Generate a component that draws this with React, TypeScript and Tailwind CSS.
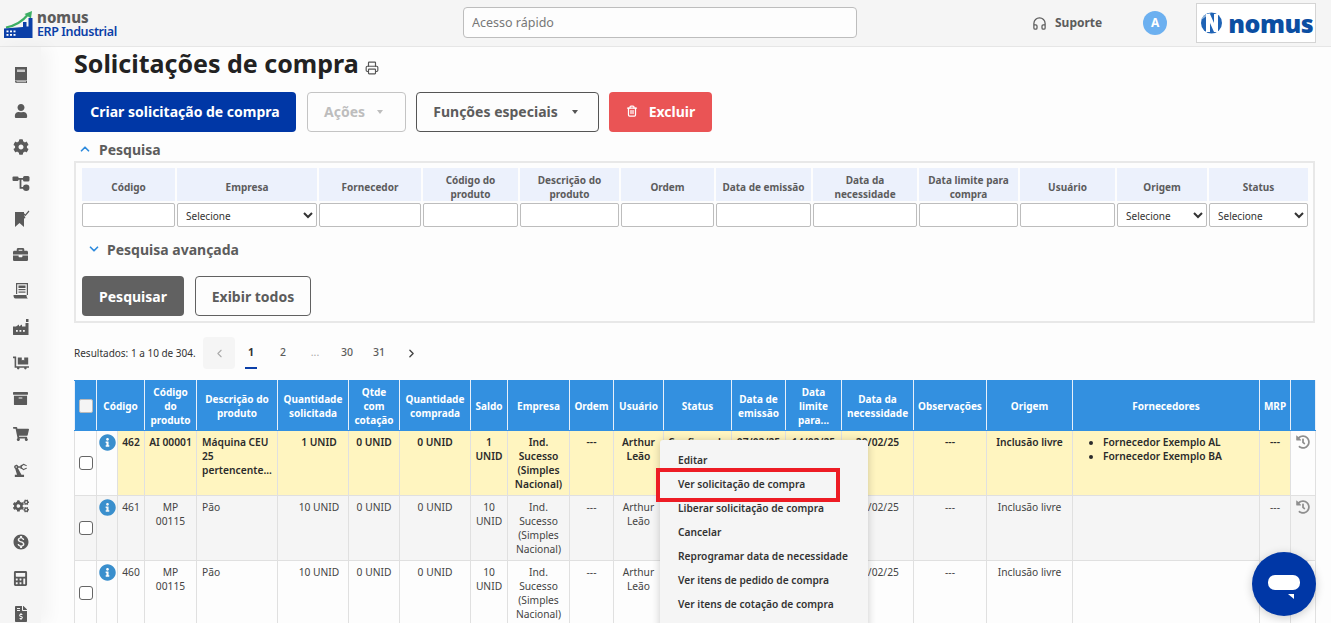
import React from "react";
import { ChevronDown, ChevronLeft, ChevronRight, ChevronUp, Headphones, Printer, Trash2 } from "lucide-react";
import {
  FaArchive,
  FaBriefcase,
  FaCalculator,
  FaCog,
  FaCogs,
  FaDollyFlatbed,
  FaFileInvoiceDollar,
  FaHistory,
  FaInfoCircle,
  FaShoppingCart,
  FaUser,
} from "react-icons/fa";
import { MdMonetizationOn, MdPrecisionManufacturing } from "react-icons/md";

function BookIcon() {
  return (
    <svg width="18" height="18" viewBox="0 0 18 18" fill="currentColor">
      <path d="M3 1H15V14H4.5C3.5 14 3 14.5 3 15Z" />
      <rect x="5" y="3.5" width="8" height="2.5" fill="#c9c9c9" />
      <path d="M3 15C3 14.6 3.5 14.6 4.5 14.6H15V17H4.5C3.5 17 3 16 3 15Z" />
      <rect x="4.5" y="15.4" width="9.5" height="0.8" fill="#f5f5f5" />
    </svg>
  );
}

function TreeIcon() {
  return (
    <svg width="18" height="18" viewBox="0 0 18 18" fill="currentColor">
      <rect x="0.5" y="2.5" width="6" height="4.5" rx="1" />
      <rect x="11" y="2" width="6.5" height="5.5" rx="1.5" />
      <circle cx="14.2" cy="13.8" r="3.2" />
      <path d="M6 4.8H12M8.5 4.8V13.8H12" stroke="currentColor" strokeWidth="1.8" fill="none" />
    </svg>
  );
}

function BookmarkCheckIcon() {
  return (
    <svg width="18" height="18" viewBox="0 0 18 18" fill="currentColor">
      <path d="M3 2H12V5L13.5 8L12 8.5V17L7.5 13L3 17Z" />
      <path d="M11.5 3.5L13.3 5.3L17 1" stroke="currentColor" strokeWidth="1.2" fill="none" />
    </svg>
  );
}

function ReceiptIcon() {
  return (
    <svg width="18" height="18" viewBox="0 0 18 18" fill="currentColor">
      <path d="M4 1H16V13H14.8V2.2H5.2V12H4Z" />
      <rect x="6.5" y="3.5" width="7" height="2.5" />
      <rect x="6.5" y="7" width="7" height="1.2" />
      <rect x="6.5" y="9.5" width="7" height="1.2" />
      <path d="M1.5 13H14.5C14.5 15 15 16 16 16.5H3.5C2 16.5 1.5 15 1.5 13Z" />
    </svg>
  );
}

function FactoryIcon() {
  return (
    <svg width="18" height="18" viewBox="0 0 18 18" fill="currentColor">
      <path d="M1 8.5H4L7 6.5V8.5L10 6.5V8.5H13.5V5H16.5V17H1.5C1.2 17 1 16.8 1 16.5Z" />
      <rect x="14" y="1" width="2.5" height="3" />
      <g fill="#f5f5f5">
        <rect x="4" y="12" width="1.8" height="1.8" />
        <rect x="7.5" y="12" width="1.8" height="1.8" />
        <rect x="11" y="12" width="1.8" height="1.8" />
      </g>
    </svg>
  );
}

const sideIcons = [
  <BookIcon />,
  <FaUser size={14} />,
  <FaCog size={16} />,
  <TreeIcon />,
  <BookmarkCheckIcon />,
  <FaBriefcase size={15} />,
  <ReceiptIcon />,
  <FactoryIcon />,
  <FaDollyFlatbed size={16} />,
  <FaArchive size={15} />,
  <FaShoppingCart size={16} />,
  <MdPrecisionManufacturing size={17} />,
  <FaCogs size={16} />,
  <MdMonetizationOn size={18} />,
  <FaCalculator size={15} />,
  <FaFileInvoiceDollar size={16} />,
];

const filters = [
  { label: "Código", width: "w-[93px]" },
  { label: "Empresa", width: "w-[140px]", select: true },
  { label: "Fornecedor", width: "w-[102px]" },
  { label: "Código do produto", width: "w-[95px]" },
  { label: "Descrição do produto", width: "w-[99px]" },
  { label: "Ordem", width: "w-[93px]" },
  { label: "Data de emissão", width: "w-[95px]" },
  { label: "Data da necessidade", width: "w-[104px]" },
  { label: "Data limite para compra", width: "w-[99px]" },
  { label: "Usuário", width: "w-[95px]" },
  { label: "Origem", width: "w-[90px]", select: true },
  { label: "Status", width: "w-[99px]", select: true },
];

const columns = [
  { label: "" },
  { label: "Código", span: 2 },
  { label: "Código do produto" },
  { label: "Descrição do produto" },
  { label: "Quantidade solicitada" },
  { label: "Qtde com cotação" },
  { label: "Quantidade comprada" },
  { label: "Saldo" },
  { label: "Empresa" },
  { label: "Ordem" },
  { label: "Usuário" },
  { label: "Status" },
  { label: "Data de emissão" },
  { label: "Data limite para..." },
  { label: "Data da necessidade" },
  { label: "Observações" },
  { label: "Origem" },
  { label: "Fornecedores" },
  { label: "MRP" },
  { label: "" },
];

const rows = [
  {
    code: "462",
    product: "AI 00001",
    description: "Máquina CEU 25 pertencente...",
    requested: "1 UNID",
    balance: "1 UNID",
    bg: "bg-[#fff5c0]",
    weight: "font-semibold text-[#2b2b2b]",
    suppliers: ["Fornecedor Exemplo AL", "Fornecedor Exemplo BA"],
    status: "Confirmada",
    issued: "07/02/25",
    limit: "14/02/25",
    date: "20/02/25",
  },
  // status e datas dessas linhas ficam atras do menu aberto
  {
    code: "461",
    product: "MP 00115",
    description: "Pão",
    requested: "10 UNID",
    balance: "10 UNID",
    bg: "bg-[#f5f5f5]",
    weight: "font-normal text-[#444]",
    suppliers: [],
    status: "",
    issued: "",
    limit: "",
    date: "20/02/25",
  },
  {
    code: "460",
    product: "MP 00115",
    description: "Pão",
    requested: "10 UNID",
    balance: "10 UNID",
    bg: "bg-[#fdfdfd]",
    weight: "font-normal text-[#444]",
    suppliers: [],
    status: "",
    issued: "",
    limit: "",
    date: "20/02/25",
  },
];

const menuItems = [
  "Editar",
  "Ver solicitação de compra",
  "Liberar solicitação de compra",
  "Cancelar",
  "Reprogramar data de necessidade",
  "Ver itens de pedido de compra",
  "Ver itens de cotação de compra",
];

const cell = "border border-[#e0e0e0] px-[5px] pt-[4px] pb-0 align-top text-center leading-[14px]";

function Logo() {
  return (
    <div className="flex w-[463px] items-center pt-[3px] pl-[4px]">
      <svg width="29" height="28" viewBox="0 0 29 28">
        <path d="M2 16.5C10 15 18 11 24 3.5" stroke="#3dae64" strokeWidth="2.2" fill="none" />
        <path d="M20.5 3L28 0L27 7.5Z" fill="#3dae64" />
        <path d="M0 27V17.5L19 16V11H22.5V15.5H24.5V7H28.5V27Z" fill="#0b3fa8" />
        <g fill="#fff">
          <rect x="2.5" y="19.5" width="2" height="1.8" />
          <rect x="6" y="19.5" width="2" height="1.8" />
          <rect x="9.5" y="19.5" width="2" height="1.8" />
          <rect x="2.5" y="23" width="2" height="1.8" />
          <rect x="6" y="23" width="2" height="1.8" />
          <rect x="9.5" y="23" width="2" height="1.8" />
        </g>
      </svg>
      <div className="ml-[4px] flex flex-col">
        <span className="text-[15px] leading-[13px] font-extrabold text-[#5c5c5c]">nomus</span>
        <span className="mt-[1px] text-[12.5px] leading-[13px] font-semibold tracking-[-0.4px] text-[#0b3fa8]">ERP Industrial</span>
      </div>
    </div>
  );
}

function Header() {
  return (
    <header className="flex h-[47px] shrink-0 items-center border-b border-[#e6e6e6] bg-[#f5f5f5]">
      <Logo />
      <div className="mb-[1px] w-[394px]">
        <input
          placeholder="Acesso rápido"
          className="h-[31px] w-full rounded-[4px] border border-[#bdbdbd] bg-[#fdfdfd] px-[8px] text-[12.5px] outline-none placeholder:text-[#777]"
        />
      </div>
      <div className="ml-[175px] flex items-center gap-[8px] text-[#5c5c5c]">
        <Headphones size={15} strokeWidth={2} />
        <span className="text-[12px] font-bold">Suporte</span>
      </div>
      <div className="ml-[41px] flex h-[24px] w-[24px] items-center justify-center rounded-full bg-[#6cb0f0] text-[12px] font-bold text-white">A</div>
      <div className="ml-[29px] flex h-[40px] w-[120px] items-center gap-[6px] border border-[#d4d4d4] bg-white pl-[4px]">
        <svg width="21" height="22" viewBox="0 0 21 22">
          <circle cx="10.5" cy="11" r="10.5" fill="#1f63b5" />
          <path d="M0 8C2 3 6 1 10 1L3 6Z" fill="#8fb4dc" />
          <path d="M5 2H9L13 11V2H17V20H13L9 11V20H5Z" fill="#fff" />
        </svg>
        <span className="text-[25px] leading-none font-black tracking-[-0.5px] text-[#0b4ea2]">nomus</span>
      </div>
    </header>
  );
}

function Sidebar() {
  return (
    <aside className="flex w-[41px] shrink-0 flex-col items-center gap-[18px] bg-[#f5f5f5] pt-[19px] shadow-[8px_0_16px_rgba(0,0,0,0.04)]">
      {sideIcons.map((icon, i) => (
        <div key={i} className="flex h-[18px] w-[18px] items-center justify-center text-[#5a5a5a]">
          {icon}
        </div>
      ))}
    </aside>
  );
}

function Actions() {
  const button = "flex h-[40px] items-center justify-center rounded-[4px] pb-[2px] text-[14px] font-bold";
  return (
    <div className="mt-[13px] flex gap-[10px]">
      <button className={`${button} w-[222px] bg-[#0037a6] text-white`}>Criar solicitação de compra</button>
      <button className={`${button} ml-px w-[99px] gap-[12px] border border-[#c4c4c4] pr-[6px] text-[#bdbdbd]`}>
        Ações <span className="mt-[1px] border-x-[3.5px] border-t-[4px] border-x-transparent border-t-[#bdbdbd]" />
      </button>
      <button className={`${button} w-[183px] gap-[14px] border border-[#555] pr-[4px] text-[#5c5c5c]`}>
        Funções especiais <span className="mt-[1px] border-x-[3.5px] border-t-[4px] border-x-transparent border-t-[#555]" />
      </button>
      <button className={`${button} w-[103px] gap-[11px] bg-[#ea5455] text-white`}>
        <Trash2 size={12} strokeWidth={2.5} /> Excluir
      </button>
    </div>
  );
}

function Search() {
  return (
    <section className="mt-[7px]">
      <div className="flex h-[20px] items-center gap-[7px] pl-[4px]">
        <ChevronUp size={14} strokeWidth={3} className="text-[#2f8bdd]" />
        <span className="text-[14px] font-bold text-[#5c5c5c]">Pesquisa</span>
      </div>
      <div className="mt-[2px] h-[162px] border-2 border-[#e8e8e8] pt-[5px] pl-[6px]">
        <div className="flex gap-[2px]">
          {filters.map((f) => (
            <div key={f.label} className={`flex ${f.width} flex-col gap-[2px]`}>
              <div className="flex h-[33px] items-center justify-center bg-[#ecf1fc] px-[4px] pt-[4px] text-center text-[10px] leading-[14px] font-bold text-[#5c5c5c]">
                {f.label}
              </div>
              {f.select ? (
                <select className="h-[24px] w-full rounded-[2px] border border-[#bdbdbd] bg-white pt-[2px] pl-[4px] text-[10px] text-[#333]">
                  <option>Selecione</option>
                </select>
              ) : (
                <input className="h-[24px] w-full rounded-[2px] border border-[#bdbdbd] bg-white" />
              )}
            </div>
          ))}
        </div>
        <div className="mt-[12px] flex h-[20px] items-center gap-[6px] pl-[5px]">
          <ChevronDown size={14} strokeWidth={3} className="text-[#2f8bdd]" />
          <span className="text-[14px] font-bold text-[#5c5c5c]">Pesquisa avançada</span>
        </div>
        <div className="mt-[17px] flex gap-[11px]">
          <button className="h-[40px] w-[102px] rounded-[4px] bg-[#616161] text-[14px] font-bold text-white">Pesquisar</button>
          <button className="h-[40px] w-[116px] rounded-[4px] border border-[#616161] text-[14px] font-bold text-[#5c5c5c]">Exibir todos</button>
        </div>
      </div>
    </section>
  );
}

function Pagination() {
  const pages = ["1", "2", "...", "30", "31"];
  return (
    <div className="mt-[14px] flex h-[32px] items-center">
      <span className="w-[129px] pt-[1px] text-[10px] text-[#333]">Resultados: 1 a 10 de 304.</span>
      <div className="flex h-[32px] w-[32px] items-center justify-center rounded-[4px] bg-[#f5f5f5] text-[#aaa]">
        <ChevronLeft size={13} strokeWidth={2} />
      </div>
      {pages.map((p, i) => (
        <div key={p} className="relative flex h-[32px] w-[32px] items-center justify-center text-[10.5px] text-[#5c5c5c]">
          <span className={i === 0 ? "font-bold text-[#333]" : p === "..." ? "text-[#aaa]" : "font-medium"}>{p}</span>
          {i === 0 && <span className="absolute bottom-0 left-[10px] h-[2px] w-[12px] bg-[#0b3fa8]" />}
        </div>
      ))}
      <div className="flex h-[32px] w-[32px] items-center justify-center text-[#444]">
        <ChevronRight size={13} strokeWidth={2.5} />
      </div>
    </div>
  );
}

function ResultsTable() {
  return (
    <table className="mt-[11px] w-[1241px] table-fixed border-collapse text-[10.25px]">
      <colgroup>
        <col className="w-[22px]" />
        <col className="w-[21px]" />
        <col className="w-[27px]" />
        <col className="w-[52px]" />
        <col className="w-[81px]" />
        <col className="w-[71px]" />
        <col className="w-[51px]" />
        <col className="w-[71px]" />
        <col className="w-[37px]" />
        <col className="w-[62px]" />
        <col className="w-[44px]" />
        <col className="w-[50px]" />
        <col className="w-[68px]" />
        <col className="w-[54px]" />
        <col className="w-[56px]" />
        <col className="w-[72px]" />
        <col className="w-[73px]" />
        <col className="w-[86px]" />
        <col className="w-[187px]" />
        <col className="w-[31px]" />
        <col className="w-[25px]" />
      </colgroup>
      <thead>
        <tr className="h-[50px] bg-[#3390e0] text-white">
          {columns.map((c, i) => (
            <th key={i} colSpan={c.span ?? 1} className="border border-x-[#e8f0fa] border-y-[#3390e0] px-[1px] text-center text-[10px] leading-[14px] font-bold">
              {i === 0 ? (
                <input type="checkbox" className="mx-auto block h-[14px] w-[14px] appearance-none rounded-[2px] border border-[#bbb] bg-[#f5f5f5]" />
              ) : (
                c.label
              )}
            </th>
          ))}
        </tr>
      </thead>
      <tbody>
        {rows.map((r, i) => {
          const side = i === 1 ? r.bg : "bg-[#fdfdfd]";
          return (
            <tr key={r.code} className={`h-[65px] ${r.weight}`}>
              <td className={`border border-[#e0e0e0] ${side} p-0 align-middle`}>
                <span className="mx-auto -mt-[1px] block h-[14px] w-[14px] rounded-[3px] border border-[#666] bg-white" />
              </td>
              <td className={`border border-[#e0e0e0] ${side} p-0 pt-[3px] align-top`}>
                <FaInfoCircle size={17} className="mx-auto text-[#3a8fcd]" />
              </td>
              <td className={`${cell} ${r.bg} px-0!`}>{r.code}</td>
              <td className={`${cell} ${r.bg} ${i === 0 ? "px-0! whitespace-nowrap" : ""}`}>{r.product}</td>
              <td className={`${cell} ${r.bg} text-left!`}>{r.description}</td>
              <td className={`${cell} ${r.bg} pl-[12px]! pr-0!`}>{r.requested}</td>
              <td className={`${cell} ${r.bg} px-0!`}>0 UNID</td>
              <td className={`${cell} ${r.bg}`}>0 UNID</td>
              <td className={`${cell} ${r.bg} px-[2px]!`}>{r.balance}</td>
              <td className={`${cell} ${r.bg} px-[6px]!`}>Ind. Sucesso (Simples Nacional)</td>
              <td className={`${cell} ${r.bg}`}>---</td>
              <td className={`${cell} ${r.bg}`}>Arthur Leão</td>
              <td className={`${cell} ${r.bg} px-0!`}>{r.status}</td>
              <td className={`${cell} ${r.bg} px-0!`}>{r.issued}</td>
              <td className={`${cell} ${r.bg} px-0!`}>{r.limit}</td>
              <td className={`${cell} ${r.bg} px-0!`}>{r.date}</td>
              <td className={`${cell} ${r.bg}`}>---</td>
              <td className={`${cell} ${r.bg} px-0!`}>Inclusão livre</td>
              <td className={`${cell} ${r.bg} text-left!`}>
                {r.suppliers.length > 0 && (
                  <ul className="list-disc pl-[25px]">
                    {r.suppliers.map((s) => (
                      <li key={s}>{s}</li>
                    ))}
                  </ul>
                )}
              </td>
              <td className={`${cell} ${r.bg}`}>---</td>
              <td className={`border border-[#e0e0e0] ${side} p-0 pt-[4px] align-top`}>
                <FaHistory size={14} className="mx-auto text-[#8f8f8f]" />
              </td>
            </tr>
          );
        })}
      </tbody>
    </table>
  );
}

export default function App() {
  return (
    <div className="relative flex h-[623px] w-[1331px] flex-col overflow-hidden bg-[#fdfdfd] font-['Noto_Sans','Open_Sans',sans-serif]">
      <Header />
      <div className="flex min-h-0 flex-1">
        <Sidebar />
        <main className="min-w-0 flex-1 pl-[33px]">
          <div className="flex h-[32px] items-center gap-[6px] pt-[1px]">
            <h1 className="text-[25px] leading-none font-bold text-[#222]">Solicitações de compra</h1>
            <Printer size={14} className="mt-[8px] text-[#555]" />
          </div>
          <Actions />
          <div className="w-[1241px]">
            <Search />
            <Pagination />
            <ResultsTable />
          </div>
        </main>
      </div>

      {/* menu de contexto aberto sobre a primeira linha */}
      <div className="absolute top-[440px] left-[660px] h-[190px] w-[208px] rounded-[3px] bg-[#f5f5f5] pt-[9px] shadow-[0_1px_8px_rgba(0,0,0,0.2)]">
        {menuItems.map((item) => (
          <div key={item} className="flex h-[24px] items-center pl-[18px] text-[10.2px] font-semibold text-[#333]">
            {item}
          </div>
        ))}
      </div>
      <div className="absolute top-[468px] left-[656px] h-[34px] w-[184px] border-[4px] border-[#ed1c24]" />

      <button className="absolute top-[552px] left-[1252px] flex h-[64px] w-[64px] items-center justify-center rounded-full bg-[#0037a6] shadow-[0_2px_10px_rgba(0,0,0,0.2)]">
        <svg width="32" height="24" viewBox="0 0 32 24" className="mt-[6px]">
          <rect x="0" y="0" width="32" height="15" rx="7" fill="#fff" />
          <path d="M20 19H26V24Z" fill="#fff" />
        </svg>
      </button>
    </div>
  );
}
